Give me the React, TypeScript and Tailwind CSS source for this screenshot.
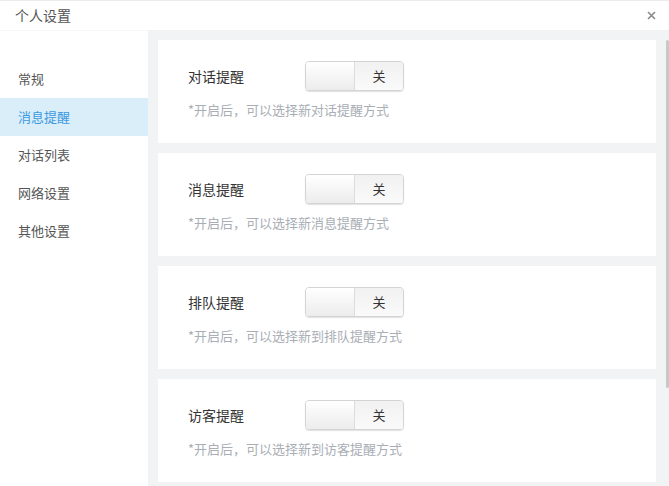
const menu = ['常规', '消息提醒', '对话列表', '网络设置', '其他设置'];

const cards = [
  { title: '对话提醒', hint: '*开启后，可以选择新对话提醒方式' },
  { title: '消息提醒', hint: '*开启后，可以选择新消息提醒方式' },
  { title: '排队提醒', hint: '*开启后，可以选择新到排队提醒方式' },
  { title: '访客提醒', hint: '*开启后，可以选择新到访客提醒方式' },
];

function Toggle() {
  return (
    <div className="flex h-[30px] w-[99px] overflow-hidden rounded-[4px] border border-[#d4d4d4] shadow-[0_1px_1px_rgba(0,0,0,0.12)]">
      <div className="w-[49px] border-r border-[#dcdcdc] bg-gradient-to-b from-[#ffffff] to-[#ececec]" />
      <div className="flex flex-1 items-center justify-center bg-gradient-to-b from-[#f1f1f1] to-[#fafafa] text-[13px] text-[#333]">
        关
      </div>
    </div>
  );
}

export default function App() {
  return (
    <div
      className="flex h-[486px] w-[669px] flex-col overflow-hidden border-t border-[#ececec] bg-white"
      style={{ fontFamily: '"Noto Sans CJK SC", "Noto Sans", sans-serif' }}
    >
      <div className="flex h-[29px] shrink-0 items-center justify-between pl-[15px] pr-[13px]">
        <span className="text-[14px] text-[#555]">个人设置</span>
        <svg width="9" height="9" viewBox="0 0 9 9">
          <path d="M1 1L8 8M8 1L1 8" stroke="#8a8a8a" strokeWidth="1.6" />
        </svg>
      </div>
      <div className="flex min-h-0 flex-1">
        <div className="w-[148px] shrink-0 bg-white pt-[30px] shadow-[inset_0_1px_1px_rgba(0,0,0,0.03)]">
          {menu.map((m) => (
            <div
              key={m}
              className={`flex h-[38px] items-center pl-[18px] text-[13px] ${
                m === '消息提醒' ? 'bg-[#daeefa] text-[#3a9be0]' : 'text-[#555]'
              }`}
            >
              {m}
            </div>
          ))}
        </div>
        <div className="flex min-w-0 flex-1 bg-[#f2f3f5]">
          <div className="flex w-[508px] flex-col gap-[10px] pl-[10px] pt-[10px]">
            {cards.map((c) => (
              <div key={c.title} className="h-[103px] shrink-0 bg-white pl-[30px] pt-[21px]">
                <div className="flex items-center">
                  <span className="w-[117px] text-[14px] text-[#333]">{c.title}</span>
                  <Toggle />
                </div>
                <div className="mt-[9px] text-[13px] text-[#a9aeb5]">{c.hint}</div>
              </div>
            ))}
          </div>
          <div className="ml-[10px] pt-[10px]">
            <div className="h-[348px] w-[3px] rounded-[2px] bg-[#c8c8c8]" />
          </div>
        </div>
      </div>
    </div>
  );
}
